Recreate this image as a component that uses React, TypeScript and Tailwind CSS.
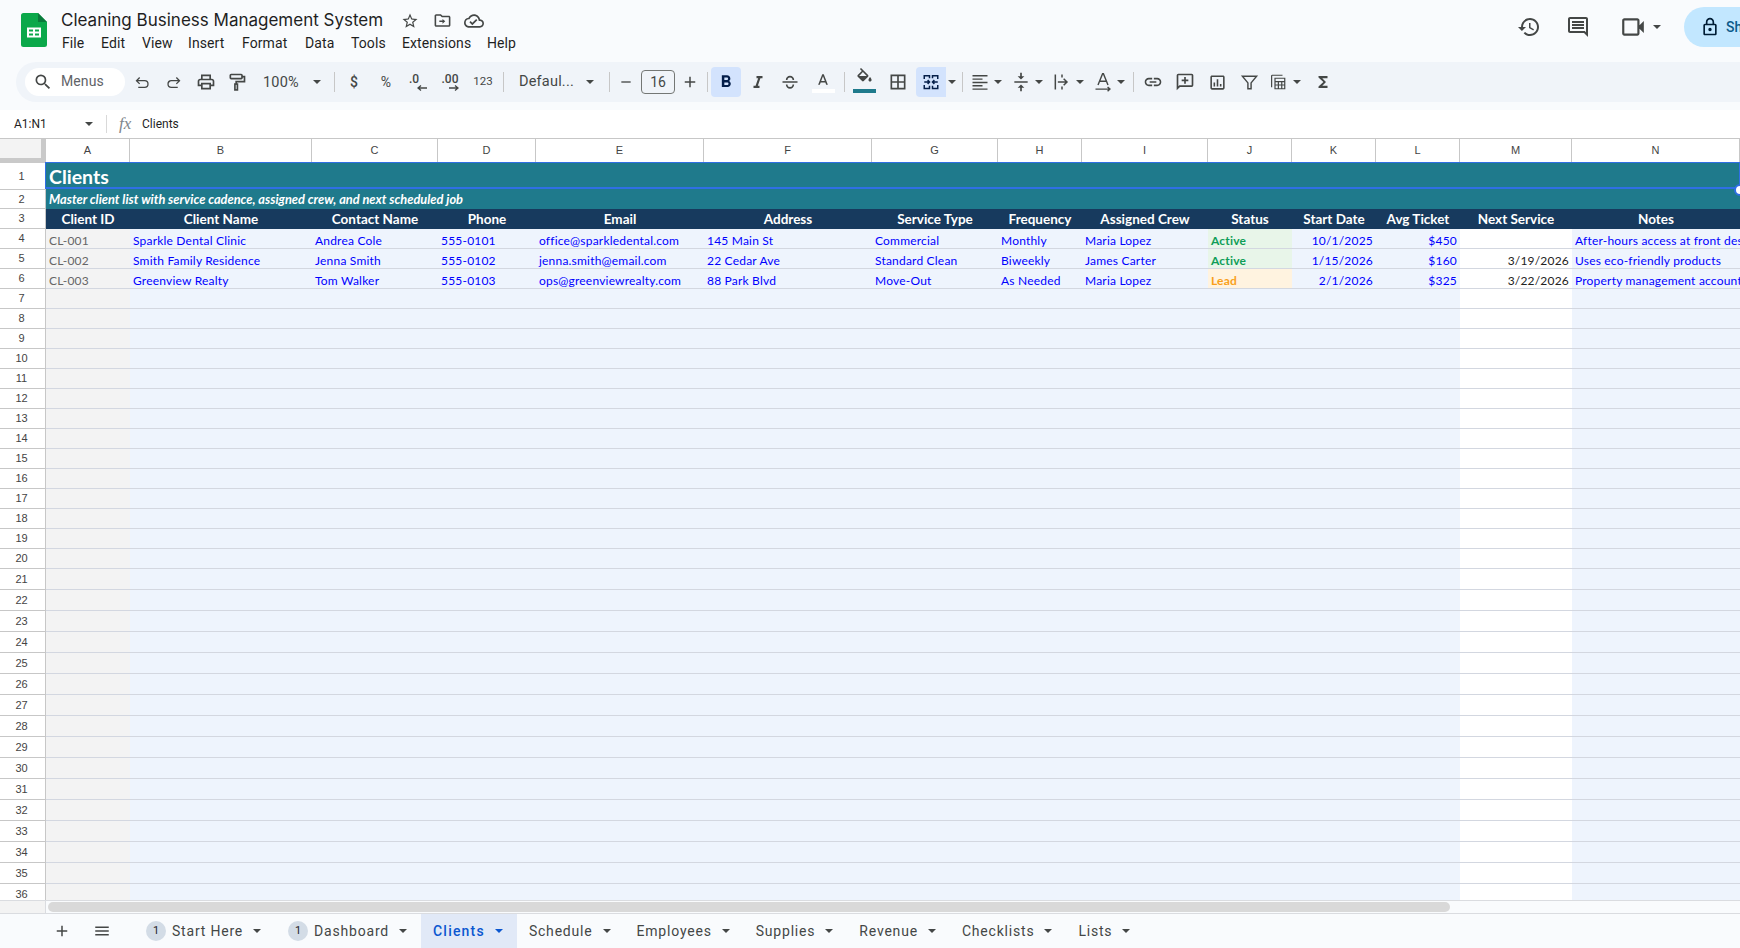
import React from "react";

const Ic = ({ d, s = 18, c = "fill-[#444746]", rule }: { d: string; s?: number; c?: string; rule?: boolean }) => (
  <svg width={s} height={s} viewBox="0 0 24 24" className={c}>
    <path d={d} fillRule={rule ? "evenodd" : undefined} />
  </svg>
);
const St = ({ children, s = 18, c = "stroke-[#444746]", w = 1.8 }: { children: React.ReactNode; s?: number; c?: string; w?: number }) => (
  <svg width={s} height={s} viewBox="0 0 24 24" fill="none" strokeWidth={w} className={c}>
    {children}
  </svg>
);
const Caret = ({ c = "fill-[#444746]" }: { c?: string }) => (
  <svg width="8" height="4" viewBox="0 0 8 4" className={`shrink-0 ${c}`}>
    <path d="M0 0h8L4 4z" />
  </svg>
);
const Box = ({ w, children }: { w: string; children?: React.ReactNode }) => (
  <div className={`${w} h-full shrink-0 flex items-center justify-center overflow-visible`}>{children}</div>
);
const Div = ({ w }: { w: string }) => (
  <div className={`${w} h-full shrink-0 flex items-center justify-center`}>
    <div className="w-px h-[20px] bg-[#c7c7c7]" />
  </div>
);

const A_PATH = "M9.62 12L12 5.67 14.38 12M11 3L5.5 17h2.25l1.12-3h6.25l1.12 3h2.25L13 3h-2z";

function TopBar() {
  return (
    <div className="h-[62px] flex bg-[#f9fbfd] font-['Roboto',sans-serif] text-[#1f1f1f] relative">
      <div className="w-[62px] shrink-0 pl-[21px] pt-[13px]">
        <svg width="26" height="34" viewBox="0 0 26 34">
          <path d="M2.5 0H17l9 9v22.5a2.5 2.5 0 0 1-2.5 2.5h-21A2.5 2.5 0 0 1 0 31.500V2.500A2.500 2.500 0 0 1 2.500 0z" fill="#0ba84a" />
          <path d="M17 0l9 9h-9z" fill="#0a7a3b" />
          <path d="M6 14.500h14v10H6z" fill="#fff" />
          <path d="M8 16.500h4v2H8zM14 16.500h4v2h-4zM8 20.500h4v2H8zM14 20.500h4v2h-4z" fill="#0ba84a" />
        </svg>
      </div>
      <div className="flex flex-col">
        <div className="h-[25px] mt-[8px] flex items-center">
          <span className="-ml-[1px] text-[17px] leading-[25px] w-[333px] whitespace-nowrap font-['Inter',sans-serif] font-normal">Cleaning Business Management System</span>
          <div className="w-[32px] flex justify-center">
            <Ic s={18} d="M22 9.240l-7.190-.620L12 2 9.190 8.630 2 9.240l5.460 4.730L5.820 21 12 17.270 18.180 21l-1.630-7.030L22 9.240zM12 15.400l-3.760 2.270 1-4.280-3.320-2.880 4.380-.380L12 6.100l1.710 4.040 4.380.380-3.320 2.880 1 4.280L12 15.400z" />
          </div>
          <div className="w-[32px] flex justify-center">
            <Ic s={19} d="M20 6h-8l-2-2H4c-1.100 0-2 .900-2 2v12c0 1.100.900 2 2 2h16c1.100 0 2-.900 2-2V8c0-1.100-.900-2-2-2zm0 12H4V6h5.170l2 2H20v10zM12 10v2H8v2h4v2l3.500-3z" />
          </div>
          <div className="w-[32px] flex justify-center">
            <Ic s={20} d="M19.350 10.040C18.670 6.590 15.640 4 12 4 9.110 4 6.600 5.640 5.350 8.040 2.340 8.360 0 10.910 0 14c0 3.310 2.690 6 6 6h13c2.760 0 5-2.240 5-5 0-2.640-2.050-4.780-4.650-4.960zM19 18H6c-2.210 0-4-1.790-4-4 0-2.050 1.530-3.760 3.560-3.970l1.070-.110.500-.950C8.080 7.140 9.940 6 12 6c2.620 0 4.880 1.860 5.390 4.430l.300 1.500 1.530.110c1.560.100 2.780 1.410 2.780 2.960 0 1.650-1.350 3-3 3zM10 14.200l-2.100-2.100L6.500 13.500 10 17l6.010-6.010-1.410-1.410z" />
          </div>
        </div>
        <div className="flex h-[20px] text-[14px] leading-[20px] tracking-[0.1px] whitespace-nowrap">
          <span className="w-[39px]">File</span>
          <span className="w-[41px]">Edit</span>
          <span className="w-[46px]">View</span>
          <span className="w-[54px]">Insert</span>
          <span className="w-[63px]">Format</span>
          <span className="w-[46px]">Data</span>
          <span className="w-[51px]">Tools</span>
          <span className="w-[85px]">Extensions</span>
          <span>Help</span>
        </div>
      </div>
      <div className="ml-auto flex items-start pt-[7px] h-full">
        <div className="w-[28px] h-[40px] flex items-center justify-center"><Ic s={24} d="M13 3c-4.970 0-9 4.030-9 9H1l3.890 3.890.070.140L9 12H6c0-3.870 3.130-7 7-7s7 3.130 7 7-3.130 7-7 7c-1.930 0-3.680-.790-4.940-2.060l-1.420 1.420C8.270 19.990 10.510 21 13 21c4.970 0 9-4.030 9-9s-4.030-9-9-9zm-1 5v5l4.280 2.540.720-1.210-3.500-2.080V8H12z" /></div>
        <div className="ml-[21px] w-[28px] h-[40px] flex items-center justify-center"><Ic s={24} d="M21.990 4c0-1.100-.890-2-1.990-2H4c-1.100 0-2 .900-2 2v12c0 1.100.900 2 2 2h14l4 4-.010-18zM20 4v13.170L18.830 16H4V4h16zM6 12h12v2H6zm0-3h12v2H6zm0-3h12v2H6z" /></div>
        <div className="ml-[27px] w-[28px] h-[40px] flex items-center justify-center"><Ic s={26} d="M18 10.480V6c0-1.100-.900-2-2-2H4c-1.100 0-2 .900-2 2v12c0 1.100.900 2 2 2h12c1.100 0 2-.900 2-2v-4.480l4 3.980v-11l-4 3.980zm-2-.790V18H4V6h12v3.690z" /></div>
        <div className="ml-[6px] w-[10px] h-[40px] flex items-center"><Caret /></div>
        <div className="ml-[21px] w-[56px] h-[40px] rounded-l-full bg-[#c2e7ff] flex items-center pl-[16px] shrink-0 overflow-hidden">
          <Ic s={20} c="fill-[#001d35] shrink-0" d="M18 8h-1V6c0-2.760-2.240-5-5-5S7 3.240 7 6v2H6c-1.100 0-2 .900-2 2v10c0 1.100.900 2 2 2h12c1.100 0 2-.900 2-2V10c0-1.100-.900-2-2-2zM9 6c0-1.660 1.340-3 3-3s3 1.340 3 3v2H9V6zm9 14H6V10h12v10zm-6-3c1.100 0 2-.900 2-2s-.900-2-2-2-2 .900-2 2 .900 2 2 2z" />
          <span className="ml-[6px] text-[14px] font-medium text-[#0b5a8a]">Share</span>
        </div>
      </div>
    </div>
  );
}

function Toolbar() {
  return (
    <div className="h-[48px] bg-[#f9fbfd] pl-[16px]">
      <div className="h-[40px] bg-[#f0f4f9] rounded-l-full pl-[9px] flex items-center font-['Roboto',sans-serif] text-[#444746]">
        <div className="w-[100px] h-[28px] shrink-0 bg-white rounded-full flex items-center pl-[8px]">
          <Ic s={20} d="M15.500 14h-.790l-.280-.270A6.470 6.470 0 0 0 16 9.500 6.500 6.500 0 1 0 9.500 16c1.610 0 3.090-.590 4.230-1.570l.270.280v.790l5 4.990L20.490 19l-4.990-5zm-6 0C7.010 14 5 11.990 5 9.500S7.010 5 9.500 5 14 7.010 14 9.500 11.990 14 9.500 14z" />
          <span className="ml-[8px] text-[14px] text-[#5f6368] tracking-[0.1px] -mt-[1px]">Menus</span>
        </div>
        <Box w="w-[34px]"><St s={17}><path d="M8 5L3.500 9.500 8 14M3.500 9.500H15a4.500 4.500 0 0 1 0 9.500H6" /></St></Box>
        <Box w="w-[28px]"><St s={17}><path d="M16 5l4.500 4.500L16 14M20.500 9.500H9a4.500 4.500 0 0 0 0 9.500h9" /></St></Box>
        <Box w="w-[38px]"><Ic s={20} d="M19 8h-1V3H6v5H5c-1.660 0-3 1.340-3 3v6h4v4h12v-4h4v-6c0-1.660-1.340-3-3-3zM8 5h8v3H8V5zm8 14H8v-4h8v4zm2-4v-2H6v2H4v-4c0-.550.450-1 1-1h14c.550 0 1 .450 1 1v4h-2z" /></Box>
        <Box w="w-[24px]"><St s={20} w={2}><rect x="4" y="3" width="14" height="5" rx="1" /><path d="M18 5.500h3v6H11v3" /><rect x="9.500" y="14.500" width="3" height="7" /></St></Box>
        <div className="w-[56px] h-full shrink-0 flex items-center pl-[14px] text-[14.500px] tracking-[0.2px] pt-[1px]">100%</div>
        <Box w="w-[24px]"><Caret /></Box>
        <Div w="w-[11px]" />
        <Box w="w-[28px]"><span className="text-[14px] font-medium">$</span></Box>
        <Box w="w-[36px]"><span className="text-[14px]">%</span></Box>
        <Box w="w-[26px]">
          <div className="flex flex-col items-center leading-none">
            <span className="text-[12px] font-medium leading-[12px] -ml-[6px]">.0</span>
            <svg width="10" height="6" viewBox="0 0 10 6" className="ml-[10px] stroke-[#444746]" fill="none" strokeWidth="1.300"><path d="M10 3H1M4 0.500L1 3l3 2.500" /></svg>
          </div>
        </Box>
        <Box w="w-[40px]">
          <div className="flex flex-col items-center leading-none">
            <span className="text-[12px] font-medium leading-[12px]">.00</span>
            <svg width="10" height="6" viewBox="0 0 10 6" className="ml-[8px] stroke-[#444746]" fill="none" strokeWidth="1.300"><path d="M0 3h9M6 0.500L9 3 6 5.500" /></svg>
          </div>
        </Box>
        <Box w="w-[26px]"><span className="text-[11.500px]">123</span></Box>
        <Div w="w-[14px]" />
        <div className="w-[70px] h-full shrink-0 flex items-center pl-[9px] text-[14.500px] tracking-[0.2px]">Defaul...</div>
        <Box w="w-[20px]"><Caret /></Box>
        <Div w="w-[18px]" />
        <Box w="w-[16px]"><Ic s={18} d="M5 11h14v2H5z" /></Box>
        <div className="ml-[7px] w-[34px] h-[24px] shrink-0 rounded-[4px] border border-[#747775] flex items-center justify-center text-[14px]">16</div>
        <Box w="w-[30px]"><Ic s={18} d="M11 5h2v6h6v2h-6v6h-2v-6H5v-2h6z" /></Box>
        <Div w="w-[4px]" />
        <div className="ml-[2px] w-[30px] h-[30px] shrink-0 rounded-[4px] bg-[#d3e3fd] flex items-center justify-center">
          <Ic s={20} c="fill-[#041e49]" d="M15.600 10.790c.970-.670 1.650-1.770 1.650-2.790 0-2.260-1.750-4-4-4H7v14h7.040c2.090 0 3.710-1.700 3.710-3.790 0-1.520-.860-2.820-2.150-3.420zM10 6.500h3c.830 0 1.500.670 1.500 1.500s-.670 1.500-1.500 1.500h-3v-3zm3.500 9H10v-3h3.500c.830 0 1.500.670 1.500 1.500s-.670 1.500-1.500 1.500z" />
        </div>
        <Box w="w-[34px]"><Ic s={18} d="M10 4v3h2.210l-3.420 10H6v3h8v-3h-2.210l3.420-10H18V4z" /></Box>
        <Box w="w-[30px]"><St s={20} w={2}><path d="M3 12h18M8 9.500a4 4 0 0 1 8 0M16 15a4 4 0 0 1-8 0" /></St></Box>
        <Box w="w-[36px]">
          <div className="flex flex-col items-center">
            <Ic s={18} d={A_PATH} />
            <div className="w-[23px] h-[4px] bg-white -mt-[1px]" />
          </div>
        </Box>
        <Div w="w-[6px]" />
        <Box w="w-[34px]">
          <div className="flex flex-col items-center -mt-[3px]">
            <Ic s={19} d="M16.560 8.940L7.620 0 6.210 1.410l2.380 2.380-5.150 5.150c-.590.590-.590 1.540 0 2.120l5.500 5.500c.290.290.680.440 1.060.440s.770-.150 1.060-.440l5.500-5.500c.590-.580.590-1.530 0-2.120zM5.210 10L10 5.210 14.790 10H5.210zM19 11.500s-2 2.170-2 3.500c0 1.100.900 2 2 2s2-.900 2-2c0-1.330-2-3.500-2-3.500z" />
            <div className="w-[23px] h-[4px] bg-[#1f7a8c] mt-[2px]" />
          </div>
        </Box>
        <Box w="w-[34px]"><Ic s={20} d="M3 3v18h18V3H3zm8 16H5v-6h6v6zm0-8H5V5h6v6zm8 8h-6v-6h6v6zm0-8h-6V5h6v6z" /></Box>
        <div className="ml-[1px] w-[30px] h-[30px] shrink-0 rounded-l-[4px] bg-[#d3e3fd] flex items-center justify-center">
          <St s={18} c="stroke-[#041e49]" w={2}>
            <path d="M3 8V3.500h7V7M3 16v4.500h7V17M21 8V3.500h-7V7M21 16v4.500h-7V17M3 12h7M7.500 9.500L10 12l-2.500 2.500M21 12h-7M16.500 9.500L14 12l2.500 2.500" />
          </St>
        </div>
        <Box w="w-[12px]"><Caret /></Box>
        <Div w="w-[8px]" />
        <Box w="w-[28px]"><St s={20} w={1.700}><path d="M3 4.500h18M3 8.500h12M3 12.500h18M3 16.500h12M3 20.500h18" /></St></Box>
        <Box w="w-[8px]"><Caret /></Box>
        <div className="ml-[5px] flex h-full shrink-0">
          <Box w="w-[28px]"><Ic s={20} d="M8 19h3v4h2v-4h3l-4-4-4 4zm8-14h-3V1h-2v4H8l4 4 4-4zM4 11v2h16v-2H4z" /></Box>
          <Box w="w-[8px]"><Caret /></Box>
        </div>
        <div className="ml-[5px] flex h-full shrink-0">
          <Box w="w-[28px]"><St s={20} w={1.800}><path d="M4 3v18M12 3v3.500M12 17.500V21M7 12h11M14 8l4 4-4 4" /></St></Box>
          <Box w="w-[8px]"><Caret /></Box>
        </div>
        <div className="ml-[5px] flex h-full shrink-0">
          <Box w="w-[28px]"><St s={20} w={1.700}><path d="M6 15.500L11.500 2h1L18 15.500M8 11h8M3 20.500h17M17.500 18l2.800 2.500-2.800 2.500" /></St></Box>
          <Box w="w-[8px]"><Caret /></Box>
        </div>
        <Div w="w-[16px]" />
        <Box w="w-[24px]"><Ic s={20} d="M3.900 12c0-1.710 1.390-3.100 3.100-3.100h4V7H7c-2.760 0-5 2.240-5 5s2.240 5 5 5h4v-1.900H7c-1.710 0-3.100-1.390-3.100-3.100zM8 13h8v-2H8v2zm9-6h-4v1.900h4c1.710 0 3.100 1.390 3.100 3.100s-1.390 3.100-3.100 3.100h-4V17h4c2.760 0 5-2.240 5-5s-2.240-5-5-5z" /></Box>
        <Box w="w-[40px]"><Ic s={20} d="M20 2H4a2 2 0 0 0-2 2v18l4-4h14a2 2 0 0 0 2-2V4a2 2 0 0 0-2-2zm0 14H5.200L4 17.200V4h16v12zM11 6h2v3h3v2h-3v3h-2v-3H8V9h3z" /></Box>
        <Box w="w-[24px]"><Ic s={19} d="M19 3H5c-1.100 0-2 .900-2 2v14c0 1.100.900 2 2 2h14c1.100 0 2-.900 2-2V5c0-1.100-.900-2-2-2zm0 16H5V5h14v14zM7 12h2v5H7zM11 8h2v9h-2zM15 14h2v3h-2z" /></Box>
        <Box w="w-[40px]"><St s={19}><path d="M3 4h18l-7 8.500V20h-4v-7.500z" /></St></Box>
        <Box w="w-[18px]"><St s={20} w={1.600}><path d="M3.500 19V4A1 1 0 0 1 4.500 3H18M8 7h13v14H8zM8 11.500h13M12.500 11.500V21M17 11.500V21M8 16h13" /></St></Box>
        <div className="ml-[6px] w-[8px] h-full shrink-0 flex items-center justify-center"><Caret /></div>
        <Box w="w-[44px]"><Ic s={18} d="M18 4H6v2l6.500 6L6 18v2h12v-3h-7l5-5-5-5h7z" /></Box>
      </div>
    </div>
  );
}

function Formula() {
  return (
    <div className="h-[28px] bg-white flex items-center font-['Roboto',sans-serif] text-[12px] text-[#1f1f1f]">
      <span className="w-[85px] pl-[14px] shrink-0">A1:N1</span>
      <Caret />
      <div className="ml-[13px] w-px h-[18px] bg-[#d9d9d9]" />
      <span className="ml-[12px] w-[23px] text-[17px] italic font-['Liberation_Serif',serif] text-[#80868b]">fx</span>
      <span>Clients</span>
    </div>
  );
}

const COLS = ["w-[84px]", "w-[182px]", "w-[126px]", "w-[98px]", "w-[168px]", "w-[168px]", "w-[126px]", "w-[84px]", "w-[126px]", "w-[84px]", "w-[84px]", "w-[84px]", "w-[112px]", "w-[168px]"];
const LETTERS = "ABCDEFGHIJKLMN".split("");
const HEAD = ["Client ID", "Client Name", "Contact Name", "Phone", "Email", "Address", "Service Type", "Frequency", "Assigned Crew", "Status", "Start Date", "Avg Ticket", "Next Service", "Notes"];
const BG = ["bg-[#f3f3f3]", "bg-[#eef4fd]", "bg-[#eef4fd]", "bg-[#eef4fd]", "bg-[#eef4fd]", "bg-[#eef4fd]", "bg-[#eef4fd]", "bg-[#eef4fd]", "bg-[#eef4fd]", "bg-[#eef4fd]", "bg-[#eef4fd]", "bg-[#eef4fd]", "bg-white", "bg-[#eef4fd]"];
const DATA = [
  ["CL-001", "Sparkle Dental Clinic", "Andrea Cole", "555-0101", "office@sparkledental.com", "145 Main St", "Commercial", "Monthly", "Maria Lopez", "Active", "10/1/2025", "$450", "", "After-hours access at front desk"],
  ["CL-002", "Smith Family Residence", "Jenna Smith", "555-0102", "jenna.smith@email.com", "22 Cedar Ave", "Standard Clean", "Biweekly", "James Carter", "Active", "1/15/2026", "$160", "3/19/2026", "Uses eco-friendly products"],
  ["CL-003", "Greenview Realty", "Tom Walker", "555-0103", "ops@greenviewrealty.com", "88 Park Blvd", "Move-Out", "As Needed", "Maria Lopez", "Lead", "2/1/2026", "$325", "3/22/2026", "Property management account"],
];

const RowHead = ({ n }: { n: number }) => (
  <div className="w-[46px] h-full shrink-0 bg-white border-r border-b border-r-[#c7c7c7] border-b-[#c7c7c7] flex items-center justify-center pr-[2px] text-[11px] text-[#444] font-['Liberation_Sans',sans-serif]">{n}</div>
);

function cellCls(i: number, v: string) {
  if (i === 0) return `${BG[i]} text-[#666666]`;
  if (i === 9) return v === "Lead" ? "bg-[#fff3e0] text-[#f9a01b] font-bold" : "bg-[#e8f5e9] text-[#0f9d58] font-bold";
  if (i === 12) return `${BG[i]} text-[#222222] justify-end`;
  if (i === 10 || i === 11) return `${BG[i]} text-[#0000ff] justify-end`;
  return `${BG[i]} text-[#0000ff]`;
}

function Sheet() {
  const empties: number[] = [];
  for (let n = 7; n <= 36; n++) empties.push(n);
  return (
    <div className="relative h-[762px] overflow-hidden">
      <div className="h-[25px] flex border-t border-t-[#c7c7c7] font-['Liberation_Sans',sans-serif] text-[11px] text-[#444] bg-white">
        <div className="w-[46px] h-full shrink-0 bg-[#f3f3f3] border-r-[5px] border-b-[5px] border-[#c9c9c9]" />
        {COLS.map((w, i) => (
          <div key={i} className={`${w} h-full shrink-0 border-r border-b border-[#c7c7c7] flex items-center justify-center`}>{LETTERS[i]}</div>
        ))}
      </div>
      <div className="flex h-[27px]">
        <RowHead n={1} />
        <div className="w-[1694px] shrink-0 bg-[#1f7a8c] text-white font-['Lato',sans-serif] font-bold text-[19.500px] flex items-center pl-[3px] pt-[1px]">Clients</div>
      </div>
      <div className="flex h-[19px]">
        <RowHead n={2} />
        <div className="w-[1694px] shrink-0 bg-[#1f7a8c] text-white font-['Lato',sans-serif] italic font-bold text-[12.800px] flex items-center pl-[3px]">Master client list with service cadence, assigned crew, and next scheduled job</div>
      </div>
      <div className="flex h-[20px]">
        <RowHead n={3} />
        {COLS.map((w, i) => (
          <div key={i} className={`${w} h-full shrink-0 bg-[#173a5e] text-white font-['Lato',sans-serif] font-bold text-[13.500px] flex items-center justify-center whitespace-nowrap pt-[1px]`}>{HEAD[i]}</div>
        ))}
      </div>
      {DATA.map((row, r) => (
        <div key={r} className="flex h-[20px]">
          <RowHead n={r + 4} />
          {COLS.map((w, i) => (
            <div key={i} className={`${w} h-full shrink-0 ${cellCls(i, row[i])} border-b border-b-[#d3d7e0] px-[3px] pt-[5px] font-['Lato',sans-serif] text-[12px] tracking-[0.2px] flex items-center whitespace-nowrap overflow-hidden`}>{row[i]}</div>
          ))}
        </div>
      ))}
      {empties.map((n) => (
        <div key={n} className={`flex ${n >= 21 ? "h-[21px]" : "h-[20px]"}`}>
          <RowHead n={n} />
          {COLS.map((w, i) => (
            <div key={i} className={`${w} h-full shrink-0 ${BG[i]} border-b border-b-[#d3d7e0]`} />
          ))}
        </div>
      ))}
      <div className="absolute left-[45px] top-[24px] w-[1695px] h-[27px] border border-b-2 border-[#2f6fe4] pointer-events-none" />
      <div className="absolute left-[1734px] top-[46px] w-[12px] h-[12px] rounded-full bg-white border-2 border-[#2f6fe4]" />
    </div>
  );
}

function Scroll() {
  return (
    <div className="h-[14px] flex bg-[#f9fbfd] border-t border-b border-[#dadce0]">
      <div className="w-[46px] h-full bg-[#f3f3f3] border-r border-[#dadce0]" />
      <div className="ml-[2px] mt-[1px] w-[1402px] h-[10px] rounded-full bg-[#d9d9d9]" />
    </div>
  );
}

function Tab({ name, badge, active }: { name: string; badge?: boolean; active?: boolean }) {
  return (
    <div className={`h-full shrink-0 flex items-center pl-[12px] ${active ? "bg-[#e1e9f7] text-[#0b57d0] font-medium" : "text-[#444746]"}`}>
      {badge && <span className="w-[20px] h-[20px] ml-[1px] mr-[6px] rounded-full bg-[#d3dce6] flex items-center justify-center text-[11px] text-[#1f1f1f]">1</span>}
      <span className={`${active ? "tracking-[1.200px]" : "tracking-[0.8px]"} whitespace-nowrap pt-[1px]`}>{name}</span>
      <div className="w-[32px] shrink-0 flex justify-start pl-[10px]"><Caret c={active ? "fill-[#0b57d0]" : "fill-[#444746]"} /></div>
    </div>
  );
}

function Tabs() {
  return (
    <div className="h-[34px] flex bg-[#f9fbfd] text-[14px] font-['Roboto',sans-serif]">
      <div className="w-[82px] shrink-0 pl-[53px] flex items-center"><Ic s={18} d="M11 5h2v6h6v2h-6v6h-2v-6H5v-2h6z" /></div>
      <div className="w-[51px] shrink-0 pl-[11px] flex items-center"><Ic s={18} d="M3 6h18v2H3zM3 11h18v2H3zM3 16h18v2H3z" /></div>
      <Tab name="Start Here" badge />
      <Tab name="Dashboard" badge />
      <Tab name="Clients" active />
      <Tab name="Schedule" />
      <Tab name="Employees" />
      <Tab name="Supplies" />
      <Tab name="Revenue" />
      <Tab name="Checklists" />
      <Tab name="Lists" />
    </div>
  );
}

export default function App() {
  return (
    <div className="w-[1740px] h-[948px] overflow-hidden bg-white">
      <TopBar />
      <Toolbar />
      <Formula />
      <Sheet />
      <Scroll />
      <Tabs />
    </div>
  );
}
